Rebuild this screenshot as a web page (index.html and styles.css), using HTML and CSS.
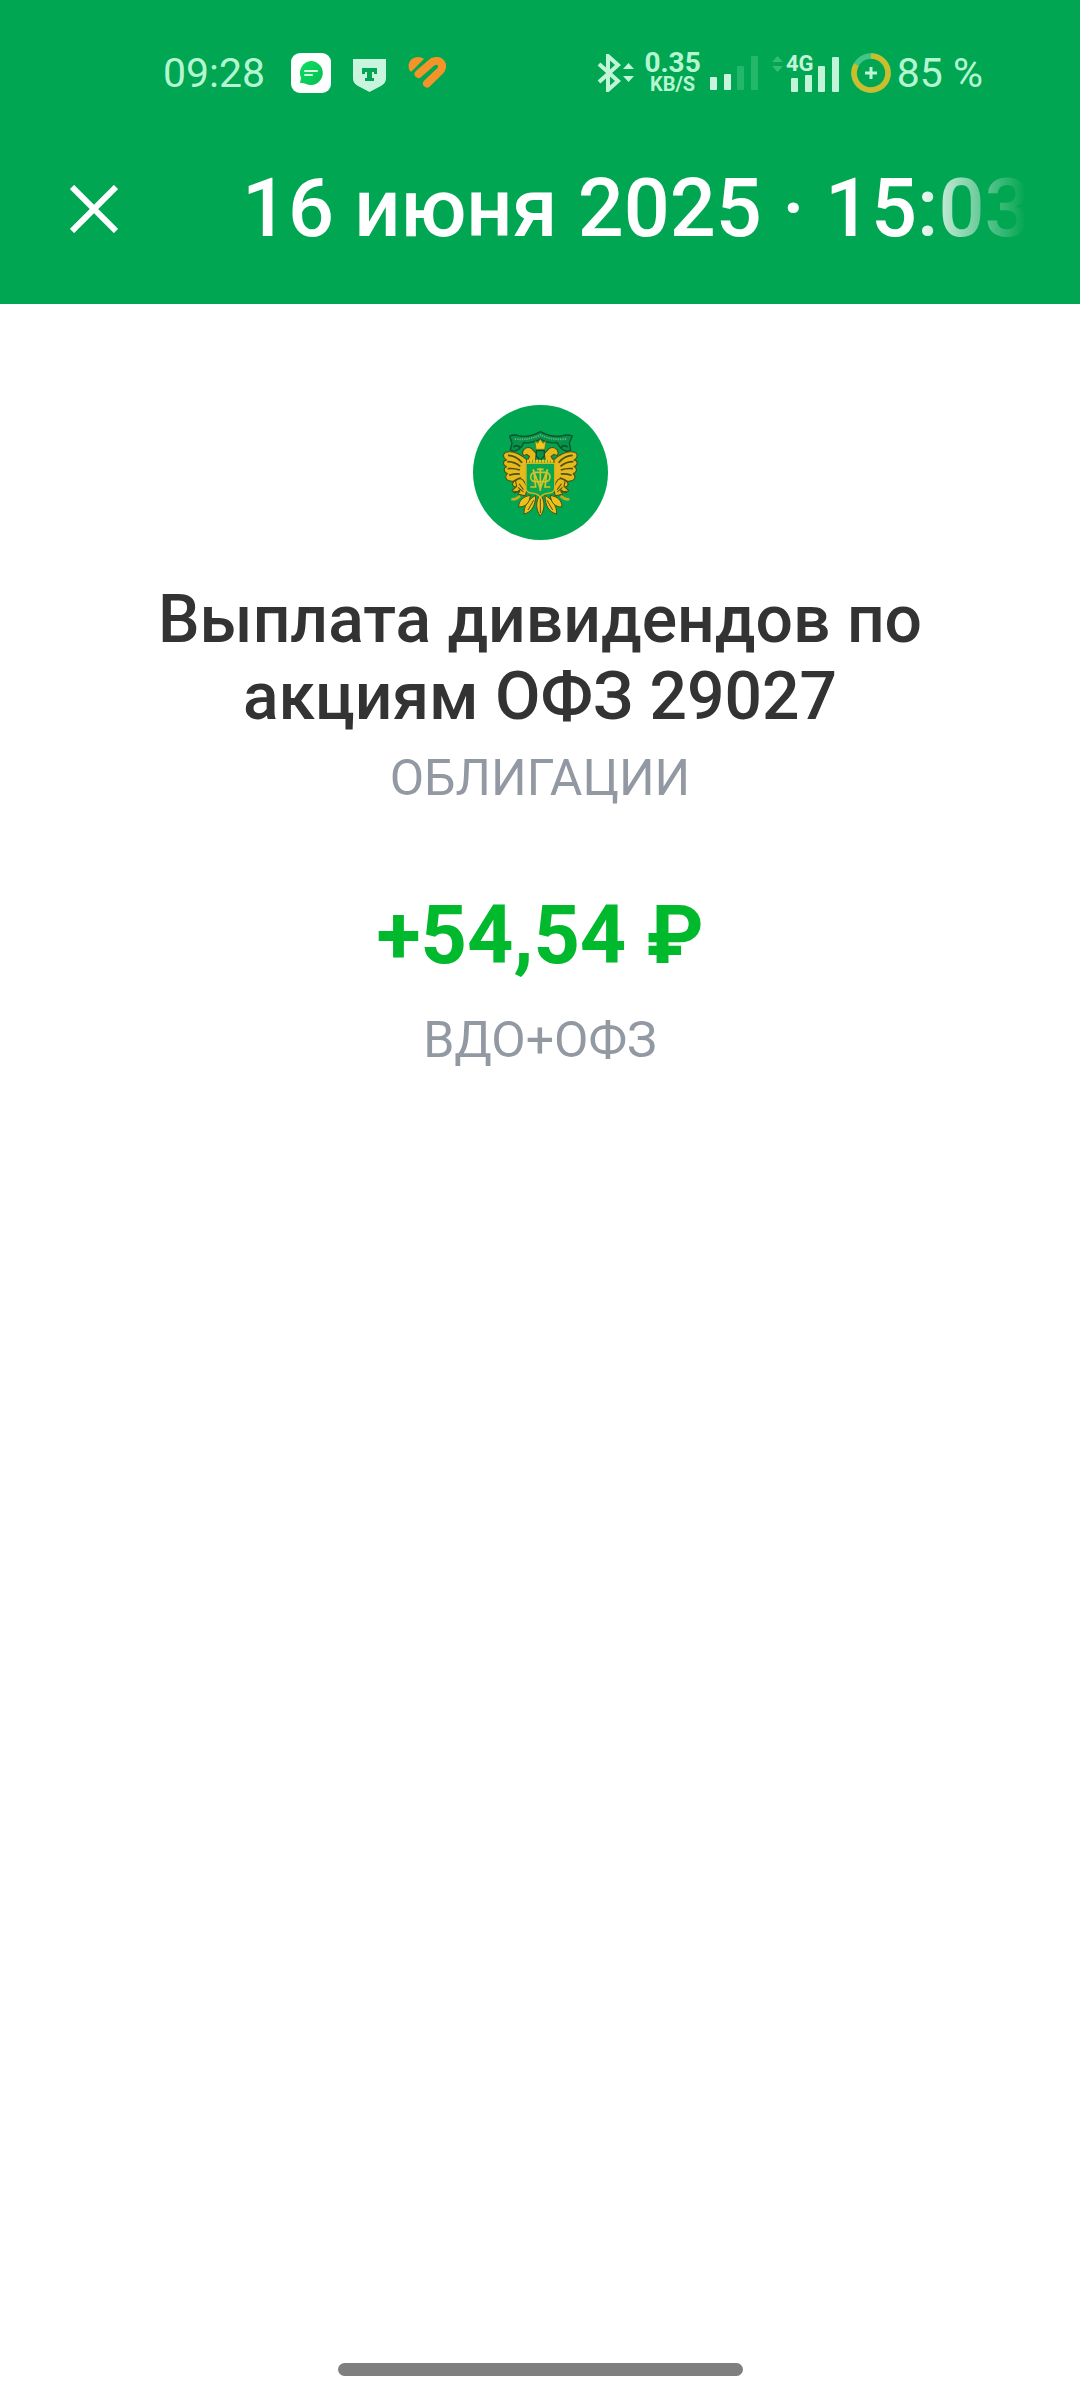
FILE: index.html
```
<!DOCTYPE html>
<html lang="ru">
<head>
    <meta charset="UTF-8">
    <meta name="viewport" content="width=device-width, initial-scale=1.0">
    <title>Выплата дивидендов</title>
    <link rel="stylesheet" href="styles.css">
</head>
<body>
    <header class="header">
        <div class="status-bar">
            <div class="status-left">
                <span class="clock">09:28</span>
                <svg class="icon-chat" viewBox="0 0 40 40" aria-hidden="true">
                    <defs>
                        <linearGradient id="chatFill" x1="0" y1="0" x2="1" y2="1">
                            <stop offset="0" stop-color="#0adf62"/>
                            <stop offset="1" stop-color="#08bd52"/>
                        </linearGradient>
                    </defs>
                    <rect width="40" height="40" rx="9" fill="#fff"/>
                    <path d="M20 8a12 12 0 1 1-5 23c-2-1-3-1-6-1l1-5A12 12 0 0 1 20 8z" fill="url(#chatFill)"/>
                    <path d="M14 18h12M14 22h7" stroke="#d6ffe4" stroke-width="2" stroke-linecap="round"/>
                </svg>
                <svg class="icon-shield" viewBox="0 0 33 33" aria-hidden="true">
                    <path d="M0 0h33v19c0 5-3 7-7 9l-9.500 5L7 28c-4-2-7-4-7-9z" fill="#c9f4de"/>
                    <path d="M9 9h15v6h-3v-2h-2v6h2v3h-9v-3h2v-6h-2v2H9z" fill="#00a651"/>
                </svg>
                <svg class="icon-heart" viewBox="0 0 38 32" aria-hidden="true">
                    <path d="M2 14C-2 7 3 0 10 0c3 0 4.500 1 6 2L4 14q-1 1-2 0z" fill="#f2942a"/>
                    <path d="M10.500 17L22 7c4-4 9-4 11-1s1 6-1 8L19 26.500" fill="none" stroke="#f2942a" stroke-width="8" stroke-linecap="round"/>
                </svg>
            </div>
            <div class="status-right">
                <svg class="icon-bluetooth" viewBox="0 0 38 38" aria-hidden="true">
                    <path d="M2 10l19 17-10 9V2l10 9L2 28" fill="none" stroke="#c0f5d8" stroke-width="4"/>
                    <path d="M26 15h11l-5.500-6zM26 22h11l-5.500 6z" fill="#c0f5d8"/>
                </svg>
                <div class="speed">
                    <span class="speed-value">0.35</span>
                    <span class="speed-unit">KB/S</span>
                </div>
                <svg class="icon-signal" viewBox="0 0 48 36" aria-hidden="true">
                    <rect y="22" width="7" height="13" rx="1" fill="#c9f4de"/>
                    <rect x="14" y="19" width="7" height="16" rx="1" fill="#c9f4de"/>
                    <rect x="27" y="11" width="7" height="24" rx="1" fill="#22b76a"/>
                    <rect x="41" y="1" width="7" height="34" rx="1" fill="#22b76a"/>
                </svg>
                <svg class="icon-lte" viewBox="0 0 68 40" aria-hidden="true">
                    <path d="M1 9h11L6.500 3zM1 13h11l-5.500 6z" fill="#30bd75"/>
                    <text class="lte-label" x="15" y="18">4G</text>
                    <g fill="#c0f5d8">
                        <rect x="20" y="25" width="7" height="14" rx="1"/>
                        <rect x="34" y="22" width="7" height="17" rx="1"/>
                        <rect x="47" y="13" width="7" height="26" rx="1"/>
                        <rect x="61" y="4" width="7" height="35" rx="1"/>
                    </g>
                </svg>
                <svg class="icon-battery" viewBox="0 0 40 40" aria-hidden="true">
                    <circle cx="20" cy="20" r="17" fill="none" stroke="#43c587" stroke-width="5.500"/>
                    <path d="M20 3A17 17 0 1 1 5.300 11.500" fill="none" stroke="#ccbd2c" stroke-width="5.500"/>
                    <path d="M20 14v12M14 20h12" stroke="#c0f5d8" stroke-width="3"/>
                </svg>
                <span class="battery-text">85 %</span>
            </div>
        </div>
        <div class="toolbar">
            <button class="close-button" type="button" aria-label="Закрыть">
                <svg viewBox="0 0 48 48" aria-hidden="true">
                    <path d="M2 2l44 44M46 2L2 46" stroke="#fff" stroke-width="6"/>
                </svg>
            </button>
            <h1 class="toolbar-title">16 июня 2025 · 15:03</h1>
        </div>
    </header>

    <main class="operation">
        <svg class="emblem" viewBox="38 44 405 405" role="img" aria-label="Минфин">
            <circle cx="240.500" cy="246.500" r="202.500" fill="#00a651"/>
            <!-- лента -->
            <path d="M148 137q14-6 30 0 32 5 62-13 32 18 64 13 16-6 32 0l-9 21 4 21q-12 9-27-3-8-8-14-19-26 3-50-11-26 14-50 11-4 11-14 19-14 11-26 3l5-21z" fill="#08924a" stroke="#07542e" stroke-width="4"/>
            <path d="M163 146q42 5 77-12 36 17 79 12" fill="none" stroke="#62b878" stroke-width="5" stroke-dasharray="4 3"/>
            <path d="M159 170q12-9 21 3M322 170q-12-9-21 3" fill="none" stroke="#07542e" stroke-width="5"/>
            <!-- крылья -->
            <g id="wing" transform="translate(-19 0) scale(1.080 1)" stroke="#4d5012" stroke-width="3" fill="#e6b91c" stroke-linejoin="round">
                <path d="M202 208c-18-17-37-29-58-22-10 5-8 17 2 23-12 3-11 15 0 20-10 5-8 18 3 21-9 7-6 19 5 21l12 3c-8 10 0 18 10 16l26-10z"/>
                <path d="M150 195q22 0 39 22M148 214q20 0 36 14M149 235q18-2 34 4M153 255q15-5 30-4M164 274q10-8 22-12" fill="none" stroke-width="5"/>
                <path d="M190 188c2-14 13-20 25-14l14 16-3 20-24 4 8-16-8-6-9 4z"/>
                <path d="M171 272c10-10 19-8 24 2l9 20-6 22-20-4 6-14-14 10-9-7 13-13z"/>
                <path d="M181 280l12 18M166 303l18 2M178 291l15 14" fill="none"/>
            </g>
            <use href="#wing" transform="matrix(-1 0 0 1 480 0)"/>
            <!-- корона -->
            <path d="M224 151l8 8 8-13 8 13 9-8-4 26h-26z" fill="#f3c51d" stroke="#6b6514" stroke-width="2"/>
            <path d="M228 181h24v17l-12 12-12-12z" fill="#08924a" stroke="#07542e" stroke-width="4"/>
            <!-- хвост -->
            <g stroke="#4d5012" stroke-width="3" fill="#edc11c">
                <path d="M240 312c-15 20-14 46 0 65 14-19 15-45 0-65z"/>
                <path d="M226 315c-24 13-36 34-35 56 23-5 35-26 35-56zM254 315c24 13 36 34 35 56-23-5-35-26-35-56z"/>
                <path d="M210 315c-22 4-34 14-35 35 21 0 33-12 35-35zM270 315c22 4 34 14 35 35-21 0-33-12-35-35z"/>
                <path d="M240 325v43M220 330l-17 29M260 330l17 29" fill="none"/>
            </g>
            <path d="M153 326q12 4 26-9M327 326q-12 4-26-9" fill="none" stroke="#c7ac1e" stroke-width="8"/>
            <!-- щит с вензелем -->
            <path d="M197 219h86v75q0 12-15 14-18 1-28 12-10-11-28-12-15-2-15-14z" fill="#08a650" stroke="#d9b31d" stroke-width="4"/>
            <path d="M200 213h80" stroke="#f1c51c" stroke-width="9" stroke-dasharray="7 2"/>
            <g fill="none" stroke="#d3c32b" stroke-width="5">
                <path d="M240 233v69M230 237h20"/>
                <rect x="211" y="246" width="58" height="28" rx="14"/>
                <path d="M218 237l22 57 22-57M210 290h16l-6-50M270 290h-16l6-50"/>
            </g>
        </svg>
        <h2 class="operation-title">Выплата дивидендов по акциям ОФЗ 29027</h2>
        <p class="caption">ОБЛИГАЦИИ</p>
        <p class="amount">+54,54 ₽</p>
        <p class="caption">ВДО+ОФЗ</p>
    </main>

    <div class="home-indicator"></div>
</body>
</html>
```

FILE: styles.css
```
* {
    box-sizing: border-box;
}
body {
    display: flex;
    flex-direction: column;
    min-height: 100vh;
    margin: 0;
    background-color: #fff;
    color: #333;
    font-family: Roboto, "Noto Sans", sans-serif;
}
h1, h2, p {
    margin: 0;
}
svg {
    display: block;
    flex-shrink: 0;
}
.header {
    background-color: #00a651;
    color: #fff;
}
.status-bar {
    display: flex;
    justify-content: space-between;
    align-items: center;
    height: 112px;
    padding: 34px 97px 0 163px;
    color: #b5f6d2;
}
.status-left,
.status-right {
    display: flex;
    align-items: center;
}
.clock,
.battery-text {
    font-size: 41px;
    line-height: 48px;
}
.icon-chat {
    width: 40px;
    height: 40px;
    margin-left: 26px;
}
.icon-shield {
    width: 33px;
    height: 33px;
    margin: 4px 22px 0;
}
.icon-heart {
    width: 38px;
    height: 32px;
}
.icon-bluetooth {
    width: 38px;
    height: 38px;
    margin-right: 9px;
}
.speed {
    display: flex;
    flex-direction: column;
    align-items: center;
    margin-right: 9px;
    font-weight: 700;
}
.speed-value {
    font-size: 28px;
    line-height: 22px;
}
.speed-unit {
    font-size: 20px;
    line-height: 20px;
}
.icon-signal {
    width: 48px;
    height: 36px;
    margin-right: 13px;
}
.icon-lte {
    width: 68px;
    height: 40px;
    margin-right: 12px;
}
.lte-label {
    fill: #c0f5d8;
    font-size: 22px;
    font-weight: 700;
}
.icon-battery {
    width: 40px;
    height: 40px;
    margin-right: 6px;
}
.toolbar {
    display: flex;
    align-items: center;
    height: 192px;
    padding: 2px 54px 0 58px;
}
.close-button {
    display: flex;
    align-items: center;
    justify-content: center;
    flex-shrink: 0;
    width: 72px;
    height: 72px;
    margin-right: 112px;
    padding: 0;
    background: none;
    border: none;
    cursor: pointer;
}
.close-button svg {
    width: 48px;
    height: 48px;
}
.toolbar-title {
    flex: 1;
    overflow: hidden;
    font-size: 81px;
    font-weight: 500;
    line-height: 98px;
    white-space: nowrap;
    -webkit-mask-image: linear-gradient(to left, transparent, #000 112px);
    mask-image: linear-gradient(to left, transparent, #000 112px);
}
.operation {
    flex: 1;
    display: flex;
    flex-direction: column;
    align-items: center;
    padding: 101px 96px 48px;
    text-align: center;
}
.emblem {
    width: 135px;
    height: 135px;
    margin-bottom: 41px;
}
.operation-title {
    margin-bottom: 14px;
    font-size: 66px;
    font-weight: 500;
    line-height: 77px;
}
.caption {
    color: #9299a2;
    font-size: 50px;
    line-height: 58px;
}
.amount {
    margin: 80px 0 26px;
    color: #00b92d;
    font-size: 81px;
    font-weight: 700;
    line-height: 98px;
}
.home-indicator {
    width: 405px;
    max-width: 60%;
    height: 13px;
    margin: 0 auto 24px;
    background-color: #7f7f7f;
    border-radius: 7px;
}
```
